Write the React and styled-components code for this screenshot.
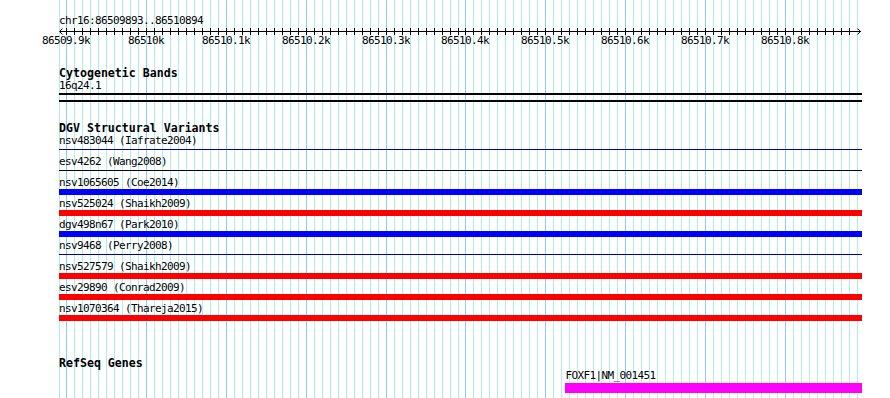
import React from "react";
import styled, { createGlobalStyle } from "styled-components";

const START = 86509893;
const END = 86510894;
const TRACK_LEFT = 59;
const TRACK_WIDTH = 803;
const PAGE_H = 398;

// pixel position of each 10bp grid step, in page coordinates
const gridX = (k) => Math.round(58.5 + k * 7.98);
const bpToPx = (bp) => ((bp - START) * TRACK_WIDTH) / (END - START + 1);

const rulerLabels = [
  "86509.9k", "86510k", "86510.1k", "86510.2k", "86510.3k",
  "86510.4k", "86510.5k", "86510.6k", "86510.7k", "86510.8k",
];

const variants = [
  { id: "nsv483044 (Iafrate2004)", kind: "line", color: "#000099" },
  { id: "esv4262 (Wang2008)", kind: "line", color: "#000000" },
  { id: "nsv1065605 (Coe2014)", kind: "bar", color: "#0000ff" },
  { id: "nsv525024 (Shaikh2009)", kind: "bar", color: "#ff0000" },
  { id: "dgv498n67 (Park2010)", kind: "bar", color: "#0000ff" },
  { id: "nsv9468 (Perry2008)", kind: "line", color: "#000099" },
  { id: "nsv527579 (Shaikh2009)", kind: "bar", color: "#ff0000" },
  { id: "esv29890 (Conrad2009)", kind: "bar", color: "#ff0000" },
  { id: "nsv1070364 (Thareja2015)", kind: "bar", color: "#ff0000" },
];

const gene = { name: "FOXF1|NM_001451", start: 86510525, end: END };

const GlobalStyle = createGlobalStyle`
  html, body {
    margin: 0;
    padding: 0;
    background: #fff;
  }
  body {
    font-family: "DejaVu Sans Mono", "Liberation Mono", monospace;
    color: #000;
  }
`;

function Grid() {
  const lines = [];
  for (let k = 0; k <= 100; k++) {
    const x = gridX(k) + 0.5;
    lines.push(
      <line
        key={k}
        x1={x}
        x2={x}
        y1={0}
        y2={PAGE_H}
        stroke={k % 10 === 1 ? "#87cefa" : "#afeeee"}
      />
    );
  }
  return (
    <GridLayer width="890" height={PAGE_H} shapeRendering="crispEdges">
      {lines}
    </GridLayer>
  );
}

function Ruler() {
  const ticks = [];
  for (let k = 1; k < 100; k++) {
    const x = gridX(k) - TRACK_LEFT + 0.5;
    ticks.push(<line key={k} x1={x} x2={x} y1={1} y2={8} stroke="#000" />);
  }
  return (
    <RulerSvg width={TRACK_WIDTH} height="20">
      <g shapeRendering="crispEdges">
        <line x1="0.5" x2="801.5" y1="4.5" y2="4.5" stroke="#000" />
        {ticks}
      </g>
      <polyline points="3.5,1.5 0.5,4.5 3.5,7.5" fill="none" stroke="#000" />
      <polyline points="798.5,1.5 801.5,4.5 798.5,7.5" fill="none" stroke="#000" />
      {rulerLabels.map((label, i) => (
        <RulerText
          key={label}
          x={gridX(1 + i * 10) - TRACK_LEFT}
          y="17"
          textAnchor="middle"
        >
          {label}
        </RulerText>
      ))}
    </RulerSvg>
  );
}

function App() {
  const geneLeft = bpToPx(gene.start);
  const geneWidth = bpToPx(gene.end + 1) - geneLeft;

  return (
    <Page>
      <GlobalStyle />
      <Grid />
      <Panel>
        <Label>chr16:86509893..86510894</Label>
        <Ruler />

        <Track $gap={20}>
          <Title>Cytogenetic Bands</Title>
          <Label>16q24.1</Label>
          <Band />
        </Track>

        <Track $gap={19}>
          <Title $tall>DGV Structural Variants</Title>
          {variants.map((v) => (
            <Row key={v.id}>
              <Label>{v.id}</Label>
              <Slot>
                <Feature $kind={v.kind} $color={v.color} />
              </Slot>
            </Row>
          ))}
        </Track>

        <Track $gap={33}>
          <Title>RefSeq Genes</Title>
          <Gene style={{ marginLeft: geneLeft, width: geneWidth }}>
            <Label>{gene.name}</Label>
            <GeneBar />
          </Gene>
        </Track>
      </Panel>
    </Page>
  );
}

export default App;

const Page = styled.div`
  position: relative;
  width: 890px;
  height: ${PAGE_H}px;
  overflow: hidden;
  background: #fff;
`;

const GridLayer = styled.svg`
  position: absolute;
  top: 0;
  left: 0;
  display: block;
`;

const Panel = styled.div`
  position: relative;
  width: ${TRACK_WIDTH}px;
  margin-left: ${TRACK_LEFT}px;
  padding-top: 15px;
  display: flex;
  flex-direction: column;
`;

const RulerSvg = styled.svg`
  display: block;
  overflow: visible;
`;

const RulerText = styled.text`
  font-family: "DejaVu Sans Mono", "Liberation Mono", monospace;
  font-size: 11px;
  letter-spacing: -0.62px;
  fill: #000;
`;

const Track = styled.section`
  display: flex;
  flex-direction: column;
  margin-top: ${(p) => p.$gap}px;
`;

const Title = styled.h3`
  margin: 0;
  font-family: "DejaVu Sans Mono", "Liberation Mono", monospace;
  font-weight: bold;
  font-size: 11.6px;
  line-height: ${(p) => (p.$tall ? 14 : 13)}px;
  white-space: nowrap;
`;

const Label = styled.div`
  font-size: 11px;
  letter-spacing: -0.62px;
  line-height: 12px;
  height: 12px;
  white-space: nowrap;
`;

const Band = styled.div`
  box-sizing: border-box;
  margin-top: 1px;
  height: 9px;
  border-top: 2px solid #000;
  border-bottom: 2px solid #000;
`;

const Row = styled.div`
  display: flex;
  flex-direction: column;
  height: 21px;
`;

const Slot = styled.div`
  height: 6px;
`;

const Feature = styled.div`
  background: ${(p) => p.$color};
  height: ${(p) => (p.$kind === "bar" ? 6 : 1)}px;
  margin-top: ${(p) => (p.$kind === "bar" ? 0 : 2)}px;
`;

const Gene = styled.div`
  display: flex;
  flex-direction: column;
`;

const GeneBar = styled.div`
  margin-top: 1px;
  height: 10px;
  background: #ff00ff;
`;
